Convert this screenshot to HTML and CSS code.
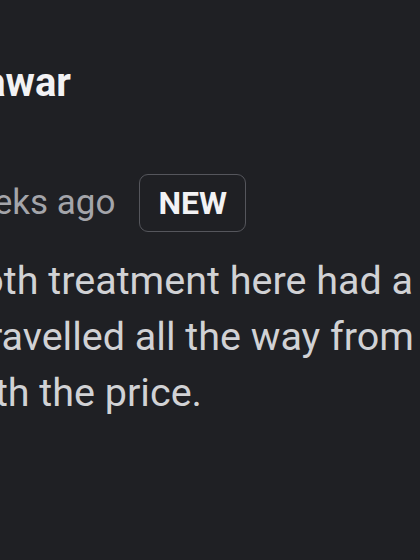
FILE: index.html
```html
<!DOCTYPE html>
<html lang="en">
<head>
<meta charset="utf-8">
<title>Review</title>
<link rel="stylesheet" href="styles.css">
</head>
<body>
<div class="viewport">
  <article class="review">
    <div class="line name-line"><h2 class="name">Raj Pawar</h2></div>
    <div class="line meta">
      <span class="time">2 weeks ago</span>
      <span class="badge">NEW</span>
    </div>
    <div class="body">
      <div class="line body-1">My tooth treatment here had a</div>
      <div class="line body-2">We travelled all the way from</div>
      <div class="line body-3">It was worth the price.</div>
    </div>
  </article>
</div>
</body>
</html>
```
FILE: styles.css
```css
html, body {
  margin: 0;
  padding: 0;
  background: #1f2024;
}
.viewport {
  width: 420px;
  height: 560px;
  overflow: hidden;
  background: #1f2024;
  font-family: Roboto, "Noto Sans", sans-serif;
}
.review {
  padding-top: 59px;
}
/* each line is cropped at the left edge of the viewport */
.line {
  display: flex;
  justify-content: flex-end;
  white-space: nowrap;
}
.name-line {
  width: 71px;
}
.name {
  margin: 0;
  font-size: 40px;
  line-height: 48px;
  font-weight: 700;
  color: #f2f2f4;
}
.meta {
  width: 246px;
  margin-top: 67px;
  height: 58px;
  align-items: center;
  gap: 24px;
}
.time {
  font-size: 35px;
  line-height: 54px;
  color: #a4a5aa;
}
.badge {
  box-sizing: border-box;
  height: 58px;
  display: flex;
  align-items: center;
  padding: 0 18px;
  border: 1.5px solid #55565c;
  border-radius: 9px;
  font-size: 32px;
  font-weight: 700;
  color: #f2f2f4;
}
.body {
  margin-top: 21px;
  font-size: 39.5px;
  line-height: 56px;
  color: #d1d2d5;
}
.body-1 { width: 413px; }
.body-2 { width: 414px; }
.body-3 { width: 202px; }
```
